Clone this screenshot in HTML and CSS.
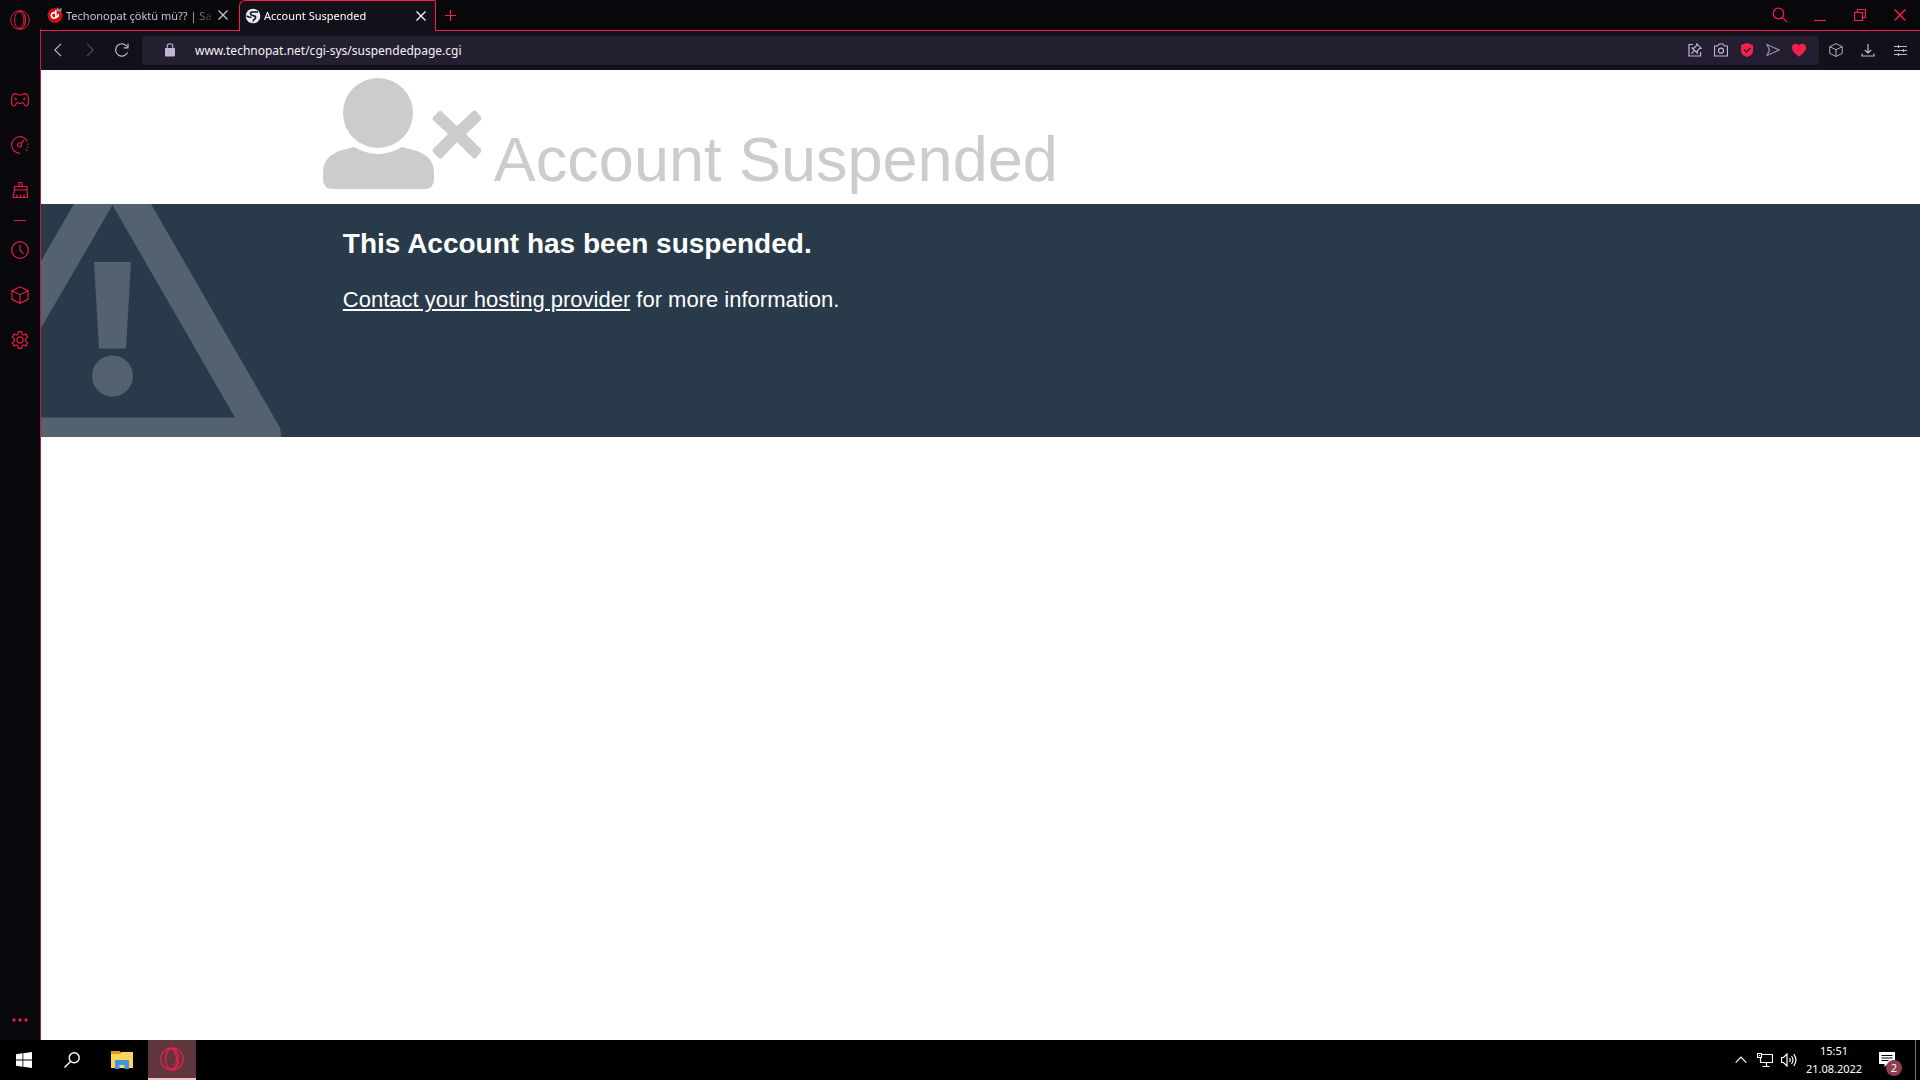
FILE: index.html
```html
<!DOCTYPE html>
<html lang="tr">
<head>
<meta charset="utf-8">
<meta name="viewport" content="width=device-width, initial-scale=1">
<title>Account Suspended</title>
<link rel="stylesheet" href="styles.css">
</head>
<body>
<svg class="defs" aria-hidden="true">
  <symbol id="cube" viewBox="0 0 18 18"><path d="M9 .8 17 4.7v8.6l-8 4-8-4V4.7zM1 4.7l8 4 8-4M9 8.700v8.600"/></symbol>
  <symbol id="x" viewBox="0 0 10 10"><path d="M.5.5l9 9M9.500.5l-9 9"/></symbol>
  <symbol id="opera" viewBox="0 0 24 24"><circle cx="12" cy="12" r="11.200"/><ellipse cx="12" cy="12" rx="6.500" ry="10.800"/><path d="M9 2.500C15 1 18.500 6 18.500 12S15 23 9 21.500M14 5c3.500 4 3.500 10 0 14"/></symbol>
</svg>
<div class="browser">
  <nav class="sidebar" aria-label="Sidebar">
    <button class="side-btn side-logo" aria-label="Menu"><svg class="line" width="20" height="20"><use href="#opera"/></svg></button>
    <button class="side-btn" aria-label="Games"><svg class="line" width="18" height="14" viewBox="0 0 18 14"><path d="M4.500.6C2 .6 1 2 .7 5.500.4 9 .4 13 3 13c1.700 0 2-3.500 3.500-3.500C7.500 9.500 8 10.500 9 10.500s1.500-1 2.500-1C13 9.500 13.300 13 15 13c2.600 0 2.600-4 2.300-7.500C17 2 16 .6 13.500.6 12 .6 11.500 2 10.500 2h-3C6.500 2 6 .6 4.500.6zM3.500 6h2.500M4.700 4.800v2.400M12 6h2.500M13.200 4.800v2.400"/></svg></button>
    <button class="side-btn" aria-label="Limits"><svg class="line" width="18" height="18" viewBox="0 0 18 18"><path d="M9 17.300A8.300 8.300 0 1 1 16.500 5.500"/><path d="M16.900 7.500A8.300 8.300 0 0 1 14 15.600" stroke-dasharray="1.500 1.500"/><circle cx="8.500" cy="9" r="2"/><path d="M10 7.500l3-3.500"/></svg></button>
    <button class="side-btn" aria-label="Cleaner"><svg class="line" width="18" height="18" viewBox="0 0 18 18"><path d="M8 5.500V1.500h3v4M3.500 9V5.500h12.500V9zM3.500 9 2 16.500h14.500L16 9M5.500 16.500l.7-3M9.500 16.500v-3M13 16.500v-3"/></svg></button>
    <span class="side-rule"></span>
    <button class="side-btn" aria-label="History"><svg class="line" width="18" height="18" viewBox="0 0 18 18"><circle cx="9" cy="9" r="8.300"/><path d="M9 4v5.200l3.500 3.600"/></svg></button>
    <button class="side-btn" aria-label="Extensions"><svg class="line" width="18" height="18"><use href="#cube"/></svg></button>
    <button class="side-btn" aria-label="Settings"><svg class="line" width="18" height="18" viewBox="0 0 18 18"><circle cx="9" cy="9" r="3.100"/><path d="M7.300.7h3.400l.5 2.500 1.300.8 2.400-.9 1.800 3-2 1.700v2.400l2 1.700-1.800 3-2.400-.9-1.300.8-.5 2.500H7.300l-.5-2.500-1.300-.8-2.400.9-1.800-3 2-1.700V7.800l-2-1.700 1.800-3 2.400.9 1.300-.8z"/></svg></button>
    <button class="side-btn side-more" aria-label="More"><svg class="fill" width="16" height="4" viewBox="0 0 16 4"><circle cx="2" cy="2" r="1.700"/><circle cx="8" cy="2" r="1.700"/><circle cx="14" cy="2" r="1.700"/></svg></button>
  </nav>
  <div class="window">
    <div class="tabbar">
      <div class="tab">
        <svg width="16" height="16" viewBox="0 0 16 16"><circle cx="8" cy="8.500" r="7.500" fill="#d10d14"/><path d="M8.800 3v7.500M8.800 6.300a2.700 2.700 0 1 0 0 4.200q2.700-.5 2.500-3.500" fill="none" stroke="#fff" stroke-width="1.600"/><path d="M10 0l2 2 3-1-1 4-4-1z" fill="#8b8b90"/></svg>
        <span class="tab-title">Techonopat çöktü mü?? | Sa</span>
        <button class="tab-close" aria-label="Close tab"><svg class="line" width="10" height="10"><use href="#x"/></svg></button>
      </div>
      <div class="tab tab-active">
        <svg width="16" height="16" viewBox="0 0 16 16"><circle cx="8" cy="8" r="7.300" fill="#e9e9ee"/><path d="M13 4H7.500Q5.500 4 5.500 5.500T7.500 7.500 10.500 8.500Q11 10.500 9 11.500L8 13.500M1.500 8l2.500 1 2.500.5" fill="none" stroke="#15121c" stroke-width="1.600"/></svg>
        <span class="tab-title">Account Suspended</span>
        <button class="tab-close" aria-label="Close tab"><svg class="line" width="10" height="10"><use href="#x"/></svg></button>
      </div>
      <button class="new-tab" aria-label="New tab"><svg class="line" width="11" height="11" viewBox="0 0 11 11"><path d="M5.500 0v11M0 5.500h11"/></svg></button>
      <div class="win-controls">
        <button class="win-btn" aria-label="Search tabs"><svg class="line" width="16" height="16" viewBox="0 0 16 16"><circle cx="6.500" cy="6.500" r="5.300"/><path d="M10.300 10.300 15 15"/></svg></button>
        <button class="win-btn" aria-label="Minimise"><svg class="line" width="12" height="12" viewBox="0 0 12 12"><path d="M0 11.500h12"/></svg></button>
        <button class="win-btn" aria-label="Restore"><svg class="line" width="12" height="12" viewBox="0 0 12 12"><path d="M.5 3.500h8v8h-8zM3.500 3.500v-3h8v8h-3"/></svg></button>
        <button class="win-btn" aria-label="Close"><svg class="line" width="12" height="12"><use href="#x"/></svg></button>
      </div>
    </div>
    <div class="toolbar">
      <button class="nav-btn" aria-label="Back"><svg class="line" width="8" height="14" viewBox="0 0 8 14"><path d="M7 .8.8 7 7 13.200"/></svg></button>
      <button class="nav-btn nav-off" aria-label="Forward" disabled><svg class="line" width="8" height="14" viewBox="0 0 8 14"><path d="M1 .8 7.200 7 1 13.200"/></svg></button>
      <button class="nav-btn" aria-label="Reload"><svg class="line" width="14" height="14" viewBox="0 0 14 14"><path d="M12.500 9.500A6.200 6.200 0 1 1 12 3.500M13 .5v4.300H8.700"/></svg></button>
      <div class="address">
        <svg class="lock" width="10" height="14" viewBox="0 0 10 14"><rect y="5" width="10" height="8.500" rx="1" fill="#c0b5d4"/><path d="M2.200 6V3.500a2.800 2.800 0 0 1 5.600 0V6" fill="none" stroke="#c0b5d4" stroke-width="1.100"/></svg>
        <input class="url" type="text" aria-label="Address" value="www.technopat.net/cgi-sys/suspendedpage.cgi">
        <button class="addr-btn" aria-label="Pin"><svg class="line" width="14" height="14" viewBox="0 0 14 14"><path d="M5 1.500H1v11.500h11.500V9M3.500 10.500 6.300 7.700M8.800.8l4.400 4.400-1.700.3-2.300 2.500v2L4.200 5h2L8.600 2.500z"/></svg></button>
        <button class="addr-btn" aria-label="Snapshot"><svg class="line" width="14" height="14" viewBox="0 0 14 14"><path d="M.5 3h3L5 1h4l1.500 2h3v10H.5z"/><circle cx="7" cy="7.700" r="2.500"/></svg></button>
        <button class="addr-btn" aria-label="Ad blocker"><svg width="14" height="14" viewBox="0 0 14 14"><path d="M7 0 13 2v6c0 3-2.500 5-6 6-3.500-1-6-3-6-6V2z" fill="#fa1e4e"/><path d="M4 6.500 6.300 9 10.500 5" fill="none" stroke="#241e31" stroke-width="1.500"/></svg></button>
        <button class="addr-btn" aria-label="Send"><svg class="line dim" width="14" height="14" viewBox="0 0 14 14"><path d="M1 1.500 13 7 1 12.500 3.500 7z"/></svg></button>
        <button class="addr-btn" aria-label="Bookmark"><svg width="14" height="14" viewBox="0 0 14 14"><path d="M7 13.700C3 10.500 0 8 0 4.500 0 .5 5-.5 7 2.800 9-.5 14 .5 14 4.500c0 3.500-3 6-7 9.200z" fill="#fa1e4e"/></svg></button>
      </div>
      <button class="nav-btn" aria-label="Extensions"><svg class="line" width="14" height="14"><use href="#cube"/></svg></button>
      <button class="nav-btn" aria-label="Downloads"><svg class="line" width="14" height="14" viewBox="0 0 14 14"><path d="M7 1v9M3.800 7 7 10l3.200-3M1 10.500V13h12v-2.500"/></svg></button>
      <button class="nav-btn" aria-label="Easy setup"><svg class="line" width="13" height="13" viewBox="0 0 13 13"><path d="M0 2.500h13M0 6.500h13M0 10.500h13M4.500 1v3M9.500 5v3M4.500 9v3"/></svg></button>
    </div>
    <main class="page">
      <header class="page-head">
        <svg class="user" width="160" height="120" viewBox="1 0 160 120" fill="#ccc"><circle cx="56" cy="35" r="35"/><path d="M32 69q24 14 48 0l15 4q17 6 17 22v6q0 10-10 10H11q-10 0-10-10v-6Q1 79 17 73z"/><path d="M119 33l16 15 16-15q1.500-1 3 0l5 6q1 2 0 3L144 56l15 15q1 1 0 3l-5 6q-2 1-3 0L135 64l-15 16q-1 1-3 0l-6-6q-1-2 0-3l15-15-15-14q-1-1 0-3l6-6q1-1 2 0z"/></svg>
        <h1 class="title">Account Suspended</h1>
      </header>
      <section class="notice">
        <svg class="warning" width="241" height="233" viewBox="0 0 241 233" fill="#54626f"><path fill-rule="evenodd" d="M0 57 33 0h77l128 222q2 3 2 11H0v-19.500h194L71.500 1 0 124z"/><path d="M53 58h37l-5 86.500H58z"/><circle cx="71.500" cy="172" r="20.500"/></svg>
        <div class="notice-text">
          <h2 class="lead">This Account has been suspended.</h2>
          <p class="info"><a class="host" href="#">Contact your hosting provider</a> for more information.</p>
        </div>
      </section>
    </main>
  </div>
</div>
<footer class="taskbar">
  <button class="task-btn" aria-label="Start"><svg width="16" height="16" viewBox="0 0 16 16" fill="#fff"><path d="M0 2.300 6.500 1.300v6.200H0zM7.300 1.200 16 0v7.500H7.300zM0 8.400h6.500v6.300L0 13.700zM7.300 8.400H16V16l-8.700-1.200z"/></svg></button>
  <button class="task-btn task-search" aria-label="Search"><svg class="line" width="16" height="16" viewBox="0 0 16 16"><circle cx="10.200" cy="5.800" r="5" stroke-width="1.400"/><path d="M6.500 9.500.5 15.500" stroke-width="1.400"/></svg></button>
  <button class="task-btn" aria-label="File Explorer"><svg width="22" height="18" viewBox="0 0 22 18"><path d="M0 0h8.500L10 1.500V6H0z" fill="#e29b00"/><path d="M0 3h9l1.500-2H22v16H0z" fill="#ffd25c"/><path d="M4 10q0-1 1-1h12q1 0 1 1v8h-4.500v-4h-5v4H4z" fill="#3a96dd"/></svg></button>
  <button class="task-btn task-active" aria-label="Opera GX"><svg class="line" width="24" height="24"><use href="#opera"/></svg></button>
  <div class="tray">
    <button class="tray-btn" aria-label="Hidden icons"><svg class="line" width="12" height="8" viewBox="0 0 12 8"><path d="M.7 6.700 6 1.200l5.300 5.500"/></svg></button>
    <button class="tray-btn" aria-label="Network"><svg class="line" width="16" height="14" viewBox="0 0 16 14"><path d="M5 1.500h10.500v8H3.500V5M9.500 9.500v4M5.500 13.500h7M.5.5h4v4h-4zM2 2.500h1"/></svg></button>
    <button class="tray-btn" aria-label="Volume"><svg class="line" width="16" height="14" viewBox="0 0 16 14"><path d="M.5 4.500h2l3.500-3.500v12L2.500 9.500h-2zM8.500 5q1.500 2 0 4M10.500 3q3 4 0 8M12.700 1.200q4.500 5.800 0 11.600"/></svg></button>
    <div class="clock"><span>15:51</span><span>21.08.2022</span></div>
    <button class="notify" aria-label="Notifications"><svg width="16" height="16" viewBox="0 0 16 16"><path d="M0 0h16v12H8.500L5.500 15v-3H0z" fill="#fff"/><path d="M2.500 3.500h11M2.500 6h11M2.500 8.500h7" stroke="#000"/></svg><span class="count">2</span></button>
  </div>
</footer>
</body>
</html>
```
FILE: styles.css
```css
* { box-sizing: border-box; }

body {
  margin: 0;
  min-height: 100vh;
  display: flex;
  flex-direction: column;
  font-family: "Noto Sans", sans-serif;
  font-size: 11px;
  background: #fff;
}

button {
  display: flex;
  align-items: center;
  justify-content: center;
  flex: none;
  padding: 0;
  border: 0;
  background: none;
  color: inherit;
  font: inherit;
}

svg { display: block; flex: none; }
.defs { position: absolute; width: 0; height: 0; }
.line { fill: none; stroke: currentColor; stroke-width: 1.2; }
.fill { fill: currentColor; }

.browser { flex: 1; display: flex; }

.sidebar {
  display: flex;
  flex-direction: column;
  flex: none;
  width: 41px;
  border-right: 1px solid #d1153f;
  border-image: linear-gradient(#08070c 30px, #d1153f 30px) 1;
  background: #08070c;
  color: #e51c49;
}
.side-btn { height: 45px; padding-bottom: 1px; }
.side-logo { height: 40px; margin-bottom: 38px; padding-bottom: 0; }
.side-rule { width: 12px; height: 1px; margin: 7px auto; background: #e51c49; }
.side-more { height: 40px; margin-top: auto; }

.window { flex: 1; min-width: 0; display: flex; flex-direction: column; }

.tabbar {
  display: flex;
  height: 30px;
  background: #08070c;
  color: #fa1e4e;
}
.tab {
  display: flex;
  align-items: center;
  width: 198px;
  height: 30px;
  padding: 0 8px 0 6px;
  gap: 3px;
  color: #c9c7cf;
}
.tab-title {
  flex: 1;
  overflow: hidden;
  white-space: nowrap;
  -webkit-mask-image: linear-gradient(90deg, #000 124px, transparent 150px);
  mask-image: linear-gradient(90deg, #000 124px, transparent 150px);
}
.tab-close { width: 16px; height: 16px; }
.tab-active {
  position: relative;
  width: 197px;
  height: 31px;
  padding: 0 6px 1px 5px;
  border: 1px solid #fa1e4e;
  border-bottom: 0;
  border-radius: 6px 2px 0 0;
  background: #121019;
  color: #fff;
}
.new-tab { width: 28px; }
.win-controls { display: flex; margin-left: auto; }
.win-btn { width: 40px; }

.toolbar {
  display: flex;
  align-items: center;
  height: 40px;
  padding: 0 4px 0 1px;
  border-top: 1px solid #fa1e4e;
  background: #121019;
  color: #c0b5d4;
}
.nav-btn { width: 32px; height: 29px; padding-bottom: 1px; }
.nav-off { opacity: .35; }
.address {
  display: flex;
  align-items: center;
  flex: 1;
  height: 29px;
  margin: 0 1px 0 4px;
  padding: 0 7px 1px 23px;
  border-radius: 4px;
  background: #241e31;
}
.lock { margin-right: 20px; }
.url {
  flex: 1;
  min-width: 0;
  padding: 0;
  border: 0;
  outline: 0;
  background: none;
  color: #f3f1f7;
  font: inherit;
  font-size: 12px;
}
.addr-btn { width: 26px; height: 28px; }
.dim { opacity: .75; }

.page {
  flex: 1;
  background: #fff;
  font-family: "Liberation Sans", Arial, sans-serif;
}
.page-head {
  display: flex;
  align-items: flex-end;
  height: 134px;
  padding: 0 15% 6px;
}
.title {
  margin: 0 0 7px 11px;
  color: #ccc;
  font-size: 63px;
  line-height: 64px;
  font-weight: 400;
}
.notice {
  position: relative;
  min-height: 233px;
  padding: 21px 15%;
  background: #293a4a;
  color: #fff;
}
.warning { position: absolute; left: 0; bottom: 0; }
.notice-text { position: relative; padding-left: 20px; }
.lead { margin: 0 0 23px; font-size: 28px; line-height: 38px; }
.info { margin: 0; font-size: 22px; line-height: 28px; }
.host { color: inherit; }

.taskbar {
  display: flex;
  height: 40px;
  background: #000;
  color: #fff;
}
.task-btn { width: 48px; }
.task-search { margin-right: 2px; }
.task-active {
  margin-left: 2px;
  border-bottom: 2px solid #f5c4cc;
  background: #5e363b;
  color: #ee1d4b;
}
.tray { display: flex; align-items: center; margin-left: auto; }
.tray-btn { width: 24px; height: 40px; }
.clock {
  display: flex;
  flex-direction: column;
  align-items: center;
  width: 66px;
  line-height: 18px;
}
.notify {
  position: relative;
  width: 49px;
  height: 40px;
  margin-right: 4px;
  padding-right: 8px;
  border-right: 1px solid #777;
}
.count {
  position: absolute;
  right: 13px;
  bottom: 4px;
  width: 16px;
  height: 16px;
  border-radius: 50%;
  background: #8b3f4c;
  line-height: 16px;
}
```
